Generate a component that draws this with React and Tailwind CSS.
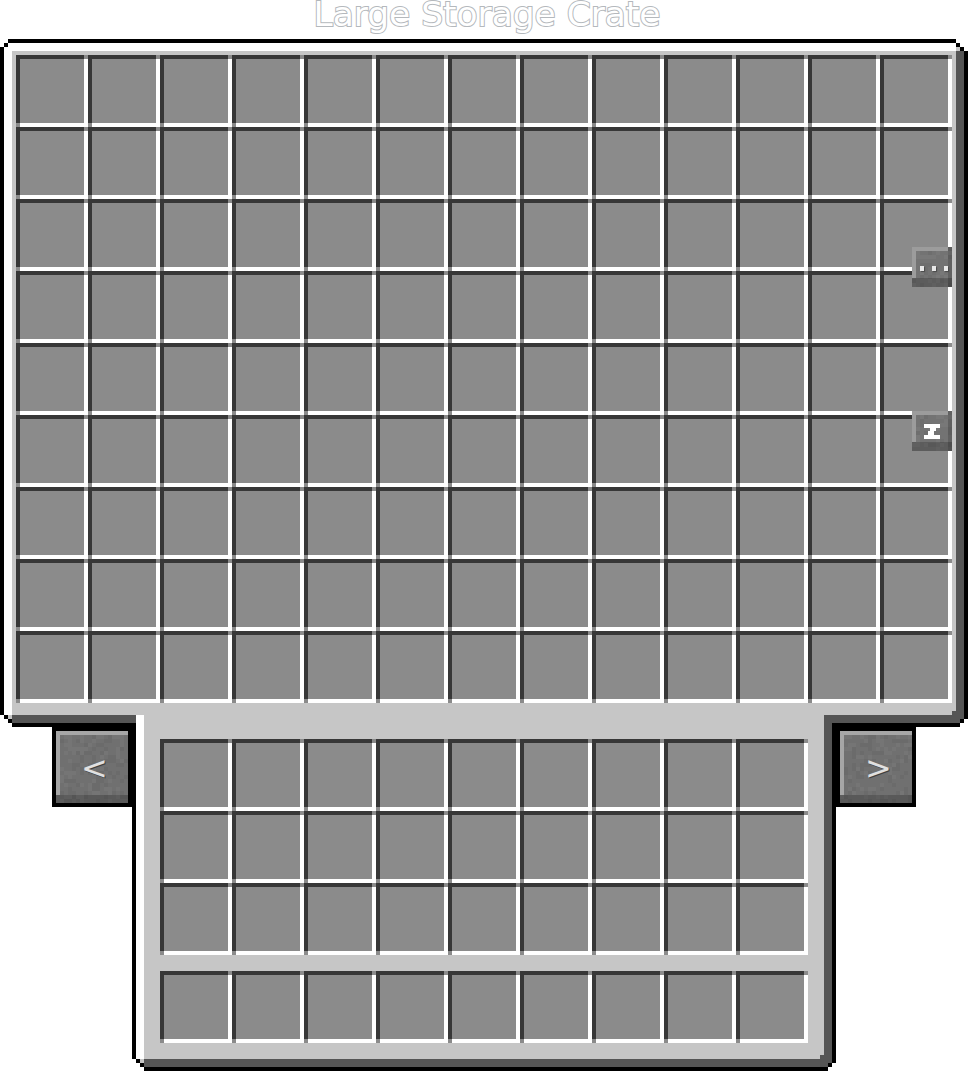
const slotIds = (n) => Array.from({ length: n }, (_, i) => i);

// stone noise for the buttons, 4px texels, seeded so it never changes
const noise = (w, h, seed) => {
  const out = [];
  let s = seed;
  for (let y = 0; y < h; y++) {
    for (let x = 0; x < w; x++) {
      s = (s * 1103515245 + 12345) & 0x7fffffff;
      const v = (s >> 16) % 100;
      if (v < 22) out.push([x, y, "#000000"]);
      else if (v > 80) out.push([x, y, "#ffffff"]);
    }
  }
  return out;
};

function Noise({ cols, rows, seed }) {
  return (
    <svg className="absolute inset-0 w-full h-full" viewBox={`0 0 ${cols} ${rows}`} shapeRendering="crispEdges">
      {noise(cols, rows, seed).map(([x, y, c]) => (
        <rect key={`${x}-${y}`} x={x} y={y} width="1" height="1" fill={c} opacity="0.04" />
      ))}
    </svg>
  );
}

function Slot() {
  return (
    <div className="relative w-[72px] h-[72px] bg-[#8b8b8b] border-4 border-t-[#373737] border-l-[#373737] border-b-white border-r-white">
      <span className="absolute -top-1 -right-1 w-1 h-1 bg-[#8b8b8b]" />
      <span className="absolute -bottom-1 -left-1 w-1 h-1 bg-[#8b8b8b]" />
    </div>
  );
}

function SlotGrid({ cols, rows }) {
  return (
    <div className={cols === 13 ? "grid grid-cols-[repeat(13,72px)]" : "grid grid-cols-[repeat(9,72px)]"}>
      {slotIds(cols * rows).map((i) => (
        <Slot key={i} />
      ))}
    </div>
  );
}

function PageButton({ dir, seed }) {
  return (
    <div className="relative w-[72px] h-[72px] bg-[#707070] overflow-hidden">
      <Noise cols={18} rows={18} seed={seed} />
      <span className="absolute left-0 top-0 w-full h-1 bg-[#a6a6a6]" />
      <span className="absolute left-0 top-0 w-1 h-[64px] bg-[#a6a6a6]" />
      <span className="absolute left-0 bottom-0 w-full h-2 bg-[#000000]/20" />
      <span className="absolute inset-0 flex items-center justify-center pl-[5px] pt-[2px] font-['DejaVu_Sans',sans-serif] text-[32px] leading-none text-[#e0e0e0] [text-shadow:1px_1px_0_#3f3f3f]">
        {dir}
      </span>
    </div>
  );
}

function TinyButton({ top, seed, children }) {
  return (
    <div className={`absolute right-[12px] ${top} w-10 h-10 bg-[#737373] overflow-hidden`}>
      <Noise cols={10} rows={10} seed={seed} />
      <span className="absolute left-0 top-0 w-9 h-1 bg-[#9c9c9c]" />
      <span className="absolute left-0 top-0 w-1 h-[31px] bg-[#9c9c9c]" />
      <span className="absolute right-0 top-0 w-1 h-full bg-[#000000]/15" />
      <span className="absolute left-0 bottom-0 w-full h-[9px] bg-[#000000]/20" />
      {children}
    </div>
  );
}

export default function App() {
  return (
    <div className="relative w-[968px] h-[1071px] bg-white">
      <div className="h-[39px] flex items-start justify-center">
        <h1 className="ml-[6px] font-['DejaVu_Sans',sans-serif] font-normal text-[34.4px] leading-[29px] text-white [-webkit-text-stroke:2px_#b4b8bc] [paint-order:stroke_fill] whitespace-nowrap">
          Large Storage Crate
        </h1>
      </div>

      {/* big chest panel */}
      <div className="relative w-[968px] h-[688px] border-4 border-black">
        <div className="w-[960px] h-[680px] border-8 border-t-white border-l-white border-r-[#555555] border-b-[#555555]">
          <div className="w-[944px] h-[664px] bg-[#c6c6c6] pt-1 pl-1">
            <SlotGrid cols={13} rows={9} />
          </div>
        </div>

        {/* pixel corners */}
        <span className="absolute -left-1 -top-1 w-2 h-1 bg-white" />
        <span className="absolute -left-1 top-0 w-2 h-1 bg-white" />
        <span className="absolute left-0 top-0 w-1 h-1 bg-black" />
        <span className="absolute left-1 top-0 w-1 h-1 bg-white" />

        <span className="absolute -right-1 -top-1 w-3 h-1 bg-white" />
        <span className="absolute -right-1 top-0 w-1 h-2 bg-white" />
        <span className="absolute right-0 top-0 w-1 h-1 bg-white" />
        <span className="absolute right-1 top-0 w-1 h-1 bg-black" />
        <span className="absolute right-0 top-1 w-1 h-1 bg-black" />
        <span className="absolute right-1 top-1 w-1 h-1 bg-[#c6c6c6]" />
        <span className="absolute right-2 top-1 w-1 h-1 bg-white" />

        <span className="absolute -left-1 -bottom-1 w-3 h-1 bg-white" />
        <span className="absolute -left-1 bottom-0 w-1 h-2 bg-white" />
        <span className="absolute left-0 bottom-0 w-1 h-1 bg-white" />
        <span className="absolute left-0 bottom-1 w-1 h-1 bg-black" />
        <span className="absolute left-1 bottom-0 w-1 h-1 bg-black" />
        <span className="absolute left-1 bottom-1 w-1 h-1 bg-[#c6c6c6]" />

        <span className="absolute -right-1 -bottom-1 w-2 h-1 bg-white" />
        <span className="absolute -right-1 bottom-0 w-1 h-1 bg-white" />
        <span className="absolute right-0 bottom-0 w-1 h-1 bg-black" />
        <span className="absolute right-2 bottom-2 w-1 h-1 bg-[#555555]" />

        <TinyButton top="top-[204px]" seed={11}>
          <span className="absolute left-2 top-[19px] w-1 h-[5px] bg-[#e8e8e8] [box-shadow:1px_1px_1px_#4a4a4a]" />
          <span className="absolute left-5 top-[19px] w-1 h-[5px] bg-[#e8e8e8] [box-shadow:1px_1px_1px_#4a4a4a]" />
          <span className="absolute left-8 top-[19px] w-1 h-[5px] bg-[#e8e8e8] [box-shadow:1px_1px_1px_#4a4a4a]" />
        </TinyButton>

        <TinyButton top="top-[368px]" seed={29}>
          <span className="absolute left-3 top-[13px] w-4 h-1 bg-white" />
          <span className="absolute left-[18px] top-[17px] w-[6px] h-[3px] bg-white" />
          <span className="absolute left-4 top-[20px] w-[6px] h-1 bg-white" />
          <span className="absolute left-3 top-6 w-4 h-1 bg-white" />
        </TinyButton>
      </div>

      {/* player inventory + page buttons */}
      <div className="relative z-10 flex items-start -mt-[12px] ml-[52px] w-[864px] h-[356px]">
        <div className="mt-[12px] border-4 border-black">
          <PageButton dir="<" seed={7} />
        </div>

        <div className="relative w-[704px] h-[356px] border-l-4 border-r-4 border-b-4 border-black">
          <div className="w-[696px] h-[352px] border-l-8 border-r-8 border-b-8 border-l-white border-r-[#555555] border-b-[#555555]">
            <div className="w-[680px] h-[344px] bg-[#c6c6c6] pt-6 pl-4">
              <SlotGrid cols={9} rows={3} />
              <div className="mt-4">
                <SlotGrid cols={9} rows={1} />
              </div>
            </div>
          </div>

          <span className="absolute -left-1 top-0 w-1 h-2 bg-[#555555]" />
          <span className="absolute -right-1 top-0 w-1 h-2 bg-[#555555]" />

          <span className="absolute -left-1 -bottom-1 w-3 h-1 bg-white" />
          <span className="absolute -left-1 bottom-0 w-1 h-2 bg-white" />
          <span className="absolute left-0 bottom-0 w-1 h-1 bg-white" />
          <span className="absolute left-0 bottom-1 w-1 h-1 bg-black" />
          <span className="absolute left-1 bottom-0 w-1 h-1 bg-black" />
          <span className="absolute left-1 bottom-1 w-1 h-1 bg-[#c6c6c6]" />

          <span className="absolute -right-1 -bottom-1 w-2 h-1 bg-white" />
          <span className="absolute -right-1 bottom-0 w-1 h-1 bg-white" />
          <span className="absolute right-0 bottom-0 w-1 h-1 bg-black" />
          <span className="absolute right-2 bottom-2 w-1 h-1 bg-[#555555]" />
        </div>

        <div className="mt-[12px] border-4 border-black">
          <PageButton dir=">" seed={19} />
        </div>
      </div>
    </div>
  );
}
